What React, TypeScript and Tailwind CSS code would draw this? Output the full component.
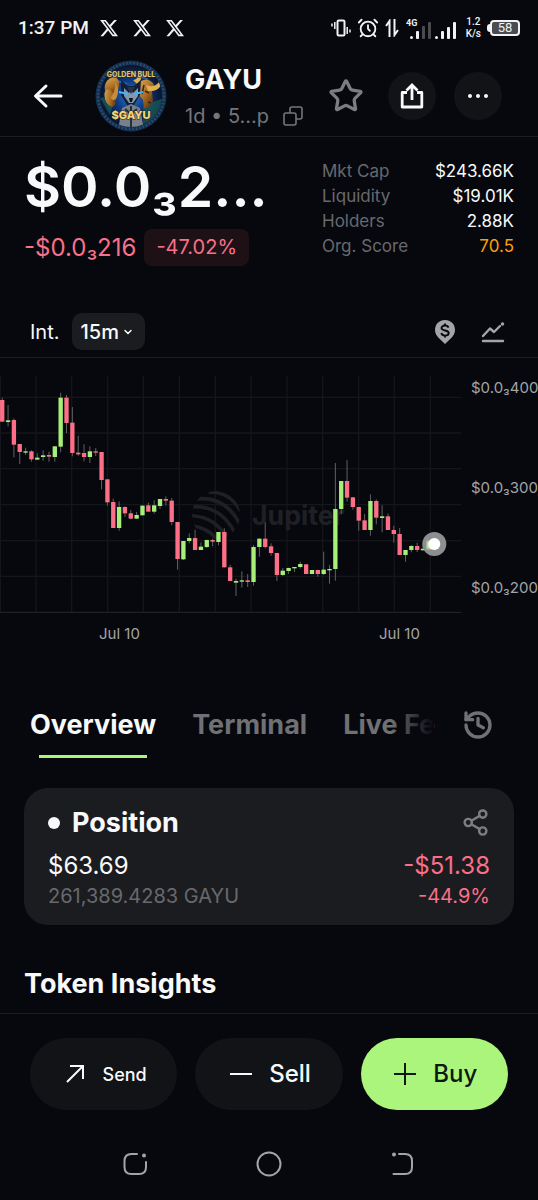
import type { ReactNode } from "react";
import { AlarmClock, ChevronDown, History, Share2, Star } from "lucide-react";
import { FaXTwitter } from "react-icons/fa6";

type Candle = [high: number, top: number, bottom: number, low: number, up: 0 | 1];

const CANDLE_STEP = 17.535;

const candles: Candle[] = [
    [98, 105, 170, 170, 0], [120, 166, 171, 184, 1], [160, 165, 239, 277, 0], [237, 237, 261, 297, 0],
    [248, 259, 263, 270, 1], [256, 259, 283, 290, 0], [265, 278, 284, 284, 1], [256, 271, 276, 287, 1],
    [260, 270, 275, 290, 0], [244, 244, 276, 290, 1], [83, 98, 245, 262, 1], [90, 98, 174, 204, 0],
    [126, 173, 264, 274, 0], [212, 263, 268, 272, 0], [238, 264, 276, 289, 0], [244, 259, 276, 294, 1],
    [249, 259, 263, 273, 0], [261, 261, 345, 373, 0], [343, 343, 412, 422, 0], [401, 411, 489, 489, 0],
    [409, 426, 489, 497, 1], [424, 426, 445, 456, 0], [435, 445, 461, 463, 0], [441, 450, 461, 461, 1],
    [421, 422, 451, 451, 1], [413, 421, 440, 440, 0], [406, 421, 440, 446, 1], [402, 402, 423, 432, 1],
    [394, 402, 407, 422, 0], [399, 407, 471, 480, 0], [471, 471, 582, 614, 0], [528, 528, 583, 585, 1],
    [505, 519, 528, 535, 1], [494, 519, 555, 555, 0], [532, 545, 555, 555, 1], [524, 525, 546, 549, 1],
    [521, 525, 530, 544, 0], [501, 501, 531, 541, 1], [490, 501, 607, 607, 0], [599, 607, 648, 648, 0],
    [641, 648, 653, 693, 1], [619, 646, 650, 668, 1], [627, 646, 651, 666, 0], [540, 546, 651, 662, 1],
    [521, 521, 546, 575, 1], [472, 521, 546, 550, 0], [535, 544, 564, 572, 0], [564, 564, 630, 648, 0],
    [609, 617, 630, 633, 1], [608, 609, 618, 627, 1], [606, 606, 610, 621, 1], [590, 597, 606, 611, 1],
    [597, 598, 627, 627, 0], [615, 615, 627, 628, 1], [614, 615, 627, 635, 0], [560, 614, 627, 630, 1],
    [600, 612, 616, 656, 1], [294, 432, 612, 647, 1], [348, 348, 432, 448, 1], [285, 348, 398, 410, 0],
    [396, 397, 426, 434, 0], [426, 426, 467, 497, 0], [447, 466, 495, 495, 0], [388, 408, 495, 512, 1],
    [403, 408, 458, 478, 0], [421, 454, 459, 502, 1], [446, 454, 495, 495, 0], [482, 495, 507, 533, 0],
    [489, 507, 570, 570, 0], [555, 555, 570, 590, 1], [540, 543, 555, 562, 1], [533, 543, 555, 561, 0],
    [535, 551, 556, 556, 1], [528, 528, 552, 552, 1],
];

const gridX = [1, 108, 215, 323, 430, 538, 646, 753, 861, 968, 1076, 1183, 1291];
const gridY = [97, 204, 311, 419, 527, 634];

const stats = [
    { label: "Mkt Cap", value: "$243.66K", color: "text-[#f8f9fa]" },
    { label: "Liquidity", value: "$19.01K", color: "text-[#f8f9fa]" },
    { label: "Holders", value: "2.88K", color: "text-[#f8f9fa]" },
    { label: "Org. Score", value: "70.5", color: "text-[#fb9d0e]" },
];

const StatusBar = () => (
    <div className="flex h-14 items-center justify-between px-[18px] font-['Roboto',sans-serif] text-[#f1f2f4]">
        <div className="flex items-center gap-[10px]">
            <span className="text-[19px] font-medium">1:37 PM</span>
            <div className="flex gap-[13px]">
                <FaXTwitter className="size-5" />
                <FaXTwitter className="size-5" />
                <FaXTwitter className="size-5" />
            </div>
        </div>
        <div className="flex items-center gap-[6px]">
            {/* Vibrate */}
            <svg className="h-[18px] w-5" viewBox="0 0 20 18" fill="none" stroke="currentColor" strokeWidth="2">
                <rect x="6.5" y="1.5" width="7" height="15" rx="1.2" />
                <path d="M1 4.5v3M3.8 3v7M16.2 8v7M19 10.500v3" strokeWidth="1.5" />
            </svg>
            <AlarmClock className="size-[22px]" strokeWidth={2} />
            {/* Data arrows */}
            <svg className="h-[18px] w-[14px]" viewBox="0 0 14 18" fill="none" stroke="currentColor" strokeWidth="2">
                <path d="M4.500 18V2L1 7M9.500 0v16L13 11" />
            </svg>
            <div className="flex items-end gap-1">
                <svg className="h-6 w-[26px]" viewBox="0 0 26 24" fill="currentColor">
                    <text x="1" y="10" fontSize="9" fontWeight="700">4G</text>
                    <rect x="5" y="20" width="3" height="3" rx="1.500" />
                    <rect x="11" y="15" width="3" height="8" rx="1" />
                    <g fill="#4a4b4e">
                        <rect x="17" y="10" width="3" height="13" rx="1" />
                        <rect x="23" y="6" width="3" height="17" rx="1" />
                    </g>
                </svg>
                <svg className="h-6 w-[21px]" viewBox="0 0 21 24" fill="currentColor">
                    <rect x="0" y="20" width="3" height="3" rx="1.500" />
                    <rect x="6" y="15" width="3" height="8" rx="1" />
                    <rect x="12" y="11" width="3" height="12" rx="1" />
                    <rect x="18" y="6" width="3" height="17" rx="1" />
                </svg>
            </div>
            <div className="ml-1 text-center text-[10px] font-medium leading-[12px]">
                <div>1.2</div>
                <div>K/s</div>
            </div>
            <div className="flex items-center">
                <span className="h-2 w-[3px] rounded-l bg-[#f1f2f4]" />
                <span className="h-4 w-[30px] rounded border-2 border-[#f1f2f4] bg-[#4b4c4f] text-center text-[13px] leading-[12px]">58</span>
            </div>
        </div>
    </div>
);

const TokenLogo = () => (
    <svg className="size-[72px] shrink-0" viewBox="0 0 72 72" role="img" aria-label="GAYU">
        <defs>
            <radialGradient id="coin" cx="50%" cy="50%" r="50%">
                <stop offset="0" stopColor="#2c7fd0" />
                <stop offset="0.5" stopColor="#0d3a83" />
                <stop offset="1" stopColor="#08142c" />
            </radialGradient>
            <linearGradient id="gold" x1="0" y1="0" x2="1" y2="1">
                <stop offset="0" stopColor="#e0ae58" />
                <stop offset="0.55" stopColor="#a76a22" />
                <stop offset="1" stopColor="#40250c" />
            </linearGradient>
            <clipPath id="inner"><circle cx="36" cy="36" r="31" /></clipPath>
        </defs>
        <circle cx="36" cy="36" r="35.500" fill="#15304f" />
        <circle cx="36" cy="36" r="33" fill="none" stroke="#4f7dab" strokeWidth="2.500" strokeDasharray="1.500 2" opacity="0.4" />
        <circle cx="36" cy="36" r="31" fill="url(#coin)" />
        <g clipPath="url(#inner)">
            <path d="M5 38c5-2 8 4 14 3l-4 14zM48 46l20-8-4 22-16 4z" fill="#1b6b63" opacity="0.6" />
            <path d="M9 8l14 8-4 4 13 4M62 12l-15 5 6 3" stroke="#3d86dc" strokeWidth="2" fill="none" opacity="0.6" />
            {/* Left gold figure */}
            <ellipse cx="17" cy="26" rx="7" ry="9" transform="rotate(25 17 26)" fill="url(#gold)" />
            <ellipse cx="15" cy="38" rx="5" ry="9" transform="rotate(-20 15 38)" fill="url(#gold)" />
            <path d="M20 22c4 4 4 11 1 17-3 2-5 1-5-2 3-4 5-9 4-15z" fill="#c68b3b" />
            {/* Bull */}
            <path d="M45 22c5-4 12-2 14 3l-2 6 1 11-5 6h-4l-1-8-7-9z" fill="url(#gold)" />
            <path d="M51 25c7 3 14 0 14-8 4 9-2 15-12 14zM38 20c4 0 6-4 6-10 3 6 3 12-2 14z" fill="#e0b055" />
            <path d="M50 31l4 2M53 42l3 1M49 25l-2 9" stroke="#3c210c" strokeWidth="1.500" />
            {/* Wolf */}
            <path d="M26 20l7 6h6l7-6-1 15-6 10-3 3-4-3-6-10z" fill="#141f36" />
            <path d="M29 28l5 5 2-3 2 3 5-5v8l-5 7h-4l-5-7z" fill="#8296ad" />
            <path d="M32 27l4 7 4-7z" fill="#24344f" />
            <path d="M34 38h4l-1 4h-2z" fill="#0a1322" />
            <path d="M24 32l9 2M48 32l-9 2" stroke="#3db7ff" strokeWidth="2" />
            <path d="M27 48l9-4 9 4 4 22H23z" fill="#78808c" />
            <path d="M36 46v22M30 49l6 5 6-5" stroke="#242d3d" strokeWidth="2" fill="none" />
        </g>
        <g fontFamily="Inter, sans-serif" fontWeight="800" textAnchor="middle" stroke="#34210a" strokeWidth="1" paintOrder="stroke">
            <text x="36" y="17" fontSize="7" fill="#d9c17e">GOLDEN BULL</text>
            <text x="36" y="59" fontSize="11" fill="#f5d77c">$GAYU</text>
        </g>
    </svg>
);

const RoundButton = ({ label, children }: { label: string; children: ReactNode }) => (
    <button type="button" aria-label={label} className="flex size-12 items-center justify-center rounded-full bg-[#121316] text-[#f8f9fa]">
        {children}
    </button>
);

const TokenHeader = () => (
    <header className="flex h-[81px] items-center border-b border-[#1b1c1f] pl-8 pr-9">
        <button type="button" aria-label="Back" className="mr-[31px] text-[#f8f9fa]">
            <svg className="h-8 w-8" viewBox="0 0 32 32" fill="none" stroke="currentColor" strokeWidth="3" strokeLinecap="round" strokeLinejoin="round">
                <path d="M29 16H4M14 6L3.500 16L14 26" />
            </svg>
        </button>
        <TokenLogo />
        <div className="ml-[18px] flex-1">
            <h1 className="text-[27px] font-bold leading-9">GAYU</h1>
            <div className="mt-1 flex items-center text-[20px] leading-7 text-[#74767a]">
                <span>1d • 5...p</span>
                <button type="button" aria-label="Copy address" className="ml-[14px]">
                    <svg className="size-5" viewBox="0 0 20 20" fill="none" stroke="currentColor" strokeWidth="1.600">
                        <rect x="1" y="7" width="12" height="12" rx="2" />
                        <path d="M7 7V3a2 2 0 0 1 2-2h8a2 2 0 0 1 2 2v8a2 2 0 0 1-2 2h-4" />
                    </svg>
                </button>
            </div>
        </div>
        <div className="flex items-center gap-[18px]">
            <button type="button" aria-label="Favourite" className="mr-[6px] text-[#7c7d80]">
                <Star className="size-9" strokeWidth={2.2} />
            </button>
            <RoundButton label="Share">
                <svg className="size-7" viewBox="0 0 28 28" fill="none" stroke="currentColor" strokeWidth="2.800">
                    <path d="M9 10.500H4.200V25H23.800V10.500H19" strokeLinejoin="round" />
                    <path d="M14 18V3.500M8.500 8.500L14 3L19.500 8.500" />
                </svg>
            </RoundButton>
            <RoundButton label="More">
                <svg className="size-6" viewBox="0 0 24 24" fill="currentColor">
                    <circle cx="4" cy="12" r="2" />
                    <circle cx="12" cy="12" r="2" />
                    <circle cx="20" cy="12" r="2" />
                </svg>
            </RoundButton>
        </div>
    </header>
);

const PriceSummary = () => (
    <section className="flex justify-between px-6 pt-4">
        <div>
            <div className="text-[57px] font-semibold leading-[68px]">$0.0₃2...</div>
            <div className="mt-2 flex items-center gap-2 text-[#f8708a]">
                <span className="text-[24px] leading-8">-$0.0₃216</span>
                <span className="rounded-lg bg-[#1d1116] px-3 text-[20px] leading-[37px]">-47.02%</span>
            </div>
        </div>
        <dl className="w-48 pt-[6px] text-[17px] leading-[25px]">
            {stats.map((stat) => (
                <div key={stat.label} className="flex justify-between">
                    <dt className="text-[#67696d]">{stat.label}</dt>
                    <dd className={stat.color}>{stat.value}</dd>
                </div>
            ))}
        </dl>
    </section>
);

const ChartToolbar = () => (
    <div className="mt-[47px] flex items-center justify-between border-b border-[#1b1c1f] pb-[7px] pl-[30px] pr-[33px]">
        <div className="flex items-center gap-3 text-[20px]">
            <span>Int.</span>
            <button type="button" className="flex h-[37px] items-center gap-[3px] rounded-[10px] bg-[#1b1c1f] pl-[9px] pr-[11px] font-medium">
                15m
                <ChevronDown className="size-3" strokeWidth={3} />
            </button>
        </div>
        <div className="flex items-center gap-[25px] text-[#a3a4a7]">
            <button type="button" aria-label="Price markers">
                <svg className="h-[26px] w-[22px]" viewBox="0 0 22 26">
                    <path d="M11 1C5.200 1 1 5.300 1 11c0 3 1.500 5.500 3.500 7.700L11 25l6.500-6.300C19.500 16.500 21 14 21 11c0-5.700-4.200-10-10-10z" fill="currentColor" />
                    <path d="M14.500 8.600C14 7.200 12.700 6.500 11 6.500c-2 0-3.500 1-3.500 2.500 0 3.500 7.200 1.500 7.200 5 0 1.600-1.500 2.600-3.600 2.600-1.900 0-3.400-.9-3.800-2.500M11 4.500v2M11 16.500v2" fill="none" stroke="#07080d" strokeWidth="1.900" />
                </svg>
            </button>
            <button type="button" aria-label="Chart type">
                <svg className="h-6 w-6" viewBox="0 0 24 24" fill="none" stroke="currentColor" strokeWidth="2.400" strokeLinecap="round" strokeLinejoin="round">
                    <path d="M2 16L9 8.500L13 12L19 6M2 21H22" />
                    <circle cx="21.500" cy="4" r="1" fill="currentColor" strokeWidth="1.500" />
                </svg>
            </button>
        </div>
    </div>
);

const PriceChart = () => (
    <section>
        <div className="flex items-start pt-[7px]">
            <svg className="min-w-0 flex-1" viewBox="0 0 1386 746" role="img" aria-label="Price chart">
                <defs>
                    <clipPath id="planet"><circle cx="648" cy="450" r="72" /></clipPath>
                    <filter id="glow"><feGaussianBlur stdDeviation="3" /></filter>
                </defs>
                <g stroke="#14161a" strokeWidth="4">
                    {gridX.map((x) => <line key={x} x1={x} x2={x} y1="34" y2="742" />)}
                    {gridY.map((y) => <line key={y} x1="0" x2="1384" y1={y} y2={y} />)}
                </g>
                <line x1="0" x2="1384" y1="742" y2="742" stroke="#26282c" strokeWidth="3" />
                {/* Watermark */}
                <g clipPath="url(#planet)" fill="none" stroke="#1f2025" strokeWidth="11">
                    <path d="M626 382Q688 378 722 438" />
                    <path d="M588 402Q676 392 720 478" />
                    <path d="M572 426Q662 418 706 506" />
                    <path d="M568 452Q648 452 684 526" />
                    <path d="M568 482Q626 486 656 530" />
                    <path d="M578 510Q604 514 624 530" />
                </g>
                <text x="756" y="481" fontSize="80" fontWeight="700" fill="#1f2025">Jupiter</text>
                {candles.map(([high, top, bottom, low, up], i) => {
                    const x = 6.6 + i * CANDLE_STEP;
                    return (
                        <g key={i}>
                            <rect x={x - 1.5} y={high} width="3" height={low - high} fill="#5f6165" />
                            <rect x={x - 6.5} y={top} width="13" height={bottom - top} fill={up ? "#a6f07a" : "#fc6f87"} />
                        </g>
                    );
                })}
                <circle cx="1303" cy="537" r="36" fill="#8d8e91" />
                <path d="M1280 528h16v24h-16z" fill="#c6f4ad" filter="url(#glow)" />
                <circle cx="1303" cy="537" r="18" fill="#ffffff" />
            </svg>
            <div className="flex w-[76px] shrink-0 flex-col gap-20 pl-[9px] pt-[13px] text-[15px] leading-5 text-[#a3a4a7]">
                <span>$0.0₃400</span>
                <span>$0.0₃300</span>
                <span>$0.0₃200</span>
            </div>
        </div>
        <div className="flex gap-60 pl-[99px] pt-[10px] text-[15px] leading-5 text-[#a3a4a7]">
            <span className="w-10 whitespace-nowrap">Jul 10</span>
            <span className="w-10 whitespace-nowrap">Jul 10</span>
        </div>
    </section>
);

const TabBar = () => (
    <nav className="mt-[63px] flex items-start pl-[30px] pr-11 text-[27px] font-bold leading-9 text-[#6f7175]">
        <div className="relative flex min-w-0 flex-1 gap-9 whitespace-nowrap">
            <a href="#overview" className="flex flex-col gap-3 text-[#f8f9fa]">
                Overview
                <span className="mx-[9px] h-[3px] bg-[#acf57c]" />
            </a>
            <a href="#terminal">Terminal</a>
            <a href="#feed">Live Fe</a>
            <div className="absolute inset-y-0 right-0 w-11 bg-gradient-to-l from-[#07080d] to-transparent" />
        </div>
        <button type="button" aria-label="History" className="ml-7 mt-[2px]">
            <History className="size-8" strokeWidth={2.5} />
        </button>
    </nav>
);

const PositionCard = () => (
    <section className="mx-6 mt-[30px] rounded-[24px] bg-[#1b1c1f] px-6 pb-[14px] pt-[17px]">
        <div className="flex items-center justify-between">
            <div className="flex items-center gap-3">
                <span className="size-3 rounded-full bg-[#f8f9fa]" />
                <h2 className="text-[27px] font-bold leading-9">Position</h2>
            </div>
            <button type="button" aria-label="Share position" className="text-[#7c7d80]">
                <Share2 className="size-[29px]" strokeWidth={2} />
            </button>
        </div>
        <div className="mt-[9px] flex justify-between text-[24px] leading-8">
            <span>$63.69</span>
            <span className="text-[#f8708a]">-$51.38</span>
        </div>
        <div className="flex justify-between text-[20px] leading-[29px]">
            <span className="text-[#67696d]">261,389.4283 GAYU</span>
            <span className="text-[#f8708a]">-44.9%</span>
        </div>
    </section>
);

type ActionButtonProps = {
    label: string;
    icon: string;
    className: string;
}

const ActionButton = ({ label, icon, className }: ActionButtonProps) => (
    <button type="button" className={`flex h-[72px] flex-1 items-center justify-center gap-4 rounded-full pl-[2px] font-medium ${className}`}>
        <svg className="size-6" viewBox="0 0 24 24" fill="none" stroke="currentColor" strokeWidth="2">
            <path d={icon} />
        </svg>
        {label}
    </button>
);

const ActionBar = () => (
    <div className="flex gap-[18px] border-t border-[#1b1c1f] px-[30px] pb-[41px] pt-6">
        <ActionButton label="Send" icon="M4 20L20 4M7 4H20V17" className="bg-[#121316] text-[18px]" />
        <ActionButton label="Sell" icon="M1 12H23" className="bg-[#121316] text-[24px]" />
        <ActionButton label="Buy" icon="M1 12H23M12 1V23" className="bg-[#acf57c] text-[24px] text-[#0d1810]" />
    </div>
);

const SystemNav = () => (
    <div className="flex items-center justify-center gap-[108px] pb-[23px] text-[#a3a4a7]">
        <button type="button" aria-label="Recent apps">
            <svg className="size-[26px]" viewBox="0 0 26 26" fill="none" stroke="currentColor" strokeWidth="2" strokeLinecap="round">
                <path d="M15 3H9.500Q2.500 3 2.500 10V16Q2.500 23 9.500 23H17Q24 23 24 16V11" />
                <circle cx="22" cy="4.500" r="1" fill="currentColor" />
            </svg>
        </button>
        <button type="button" aria-label="Home">
            <svg className="size-[26px]" viewBox="0 0 26 26" fill="none" stroke="currentColor" strokeWidth="2">
                <circle cx="13" cy="13" r="11.500" />
            </svg>
        </button>
        <button type="button" aria-label="Back to previous screen">
            <svg className="size-[26px]" viewBox="0 0 26 26" fill="none" stroke="currentColor" strokeWidth="2" strokeLinecap="round">
                <path d="M9 3H15Q22 3 22 10V16Q22 23 15 23H3.500" />
                <circle cx="4" cy="3.500" r="1" fill="currentColor" />
            </svg>
        </button>
    </div>
);

export default function App() {
    return (
        <div className="flex min-h-screen flex-col bg-[#07080d] font-['Inter',sans-serif] text-[#f8f9fa]">
            <StatusBar />
            <TokenHeader />
            <main className="flex-1">
                <PriceSummary />
                <ChartToolbar />
                <PriceChart />
                <TabBar />
                <PositionCard />
                <h2 className="mt-[41px] px-6 pb-[7px] text-[27px] font-bold leading-9">Token Insights</h2>
            </main>
            <ActionBar />
            <SystemNav />
        </div>
    );
}
